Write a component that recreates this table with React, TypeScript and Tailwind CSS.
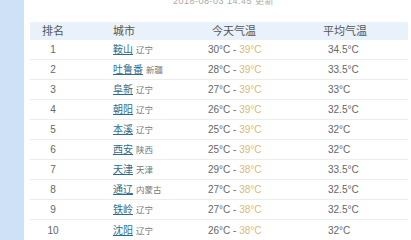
import React from "react";

const rows = [
  ["1", "鞍山", "辽宁", "30°C", "39°C", "34.5°C"],
  ["2", "吐鲁番", "新疆", "28°C", "39°C", "33.5°C"],
  ["3", "阜新", "辽宁", "27°C", "39°C", "33°C"],
  ["4", "朝阳", "辽宁", "26°C", "39°C", "32.5°C"],
  ["5", "本溪", "辽宁", "25°C", "39°C", "32°C"],
  ["6", "西安", "陕西", "25°C", "39°C", "32°C"],
  ["7", "天津", "天津", "29°C", "38°C", "33.5°C"],
  ["8", "通辽", "内蒙古", "27°C", "38°C", "32.5°C"],
  ["9", "铁岭", "辽宁", "27°C", "38°C", "32.5°C"],
  ["10", "沈阳", "辽宁", "26°C", "38°C", "32°C"],
];

export default function App() {
  return (
    <div
      className="flex w-[411px] h-[240px] overflow-hidden bg-white"
      style={{ fontFamily: '"Liberation Sans", "Noto Sans CJK SC", sans-serif' }}
    >
      <div className="w-[24px] shrink-0 bg-[#cfe1f6]" />
      <div className="flex flex-col pl-[6px] w-[384px]">
        <div className="h-[22px] shrink-0">
          <div className="-mt-[4px] pl-[143px] text-[9px] leading-[10px] text-[#a8a8a8] tracking-[0.5px]">
            2018-08-03 14:45 更新
          </div>
        </div>
        <div className="flex h-[18px] items-center bg-[#e9f2fb] text-[11px] text-[#555]">
          <div className="w-[46px] text-center">排名</div>
          <div className="w-[124px] pl-[37px]">城市</div>
          <div className="w-[112px] pl-[12px]">今天气温</div>
          <div className="flex-1 pl-[11px]">平均气温</div>
        </div>
        {rows.map((r, i) => (
          <div
            key={i}
            className={`flex h-[20px] items-center text-[10px] text-[#666] ${i < rows.length - 1 ? "border-b border-[#ececec]" : ""}`}
          >
            <div className="w-[46px] text-center">{r[0]}</div>
            <div className="w-[124px] pl-[37px] flex items-baseline">
              <span className="text-[#2f6c8c] underline underline-offset-1">{r[1]}</span>
              <span className="ml-[3px] text-[8.5px] text-[#777]">{r[2]}</span>
            </div>
            <div className="w-[112px] pl-[8px]">
              {r[3]} - <span className="text-[#d8ba7c]">{r[4]}</span>
            </div>
            <div className="flex-1 pl-[16px]">{r[5]}</div>
          </div>
        ))}
      </div>
    </div>
  );
}
